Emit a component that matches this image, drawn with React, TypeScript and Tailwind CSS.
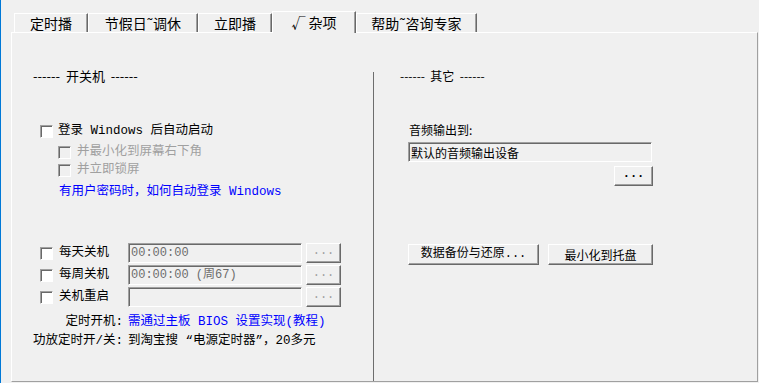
import React from "react";

const mono = { fontFamily: '"Liberation Mono","Noto Sans CJK SC",monospace' };
const sans = { fontFamily: '"Noto Sans CJK SC","Noto Sans",sans-serif' };

const sunken =
  "border border-t-[#a0a0a0] border-l-[#a0a0a0] border-b-white border-r-white shadow-[inset_1px_1px_0_#696969]";
const raised =
  "border border-t-white border-l-white border-r-[#696969] border-b-[#696969] shadow-[inset_-1px_-1px_0_#a0a0a0]";

const Check = ({ disabled = false }: { disabled?: boolean }) => (
  <div className={`w-[13px] h-[13px] shrink-0 ${sunken} ${disabled ? "bg-[#f0f0f0]" : "bg-white"}`} />
);

const Tab = ({ label, w, active = false }: { label: string; w: string; active?: boolean }) => (
  <div
    className={`${w} flex items-center justify-center border-l border-t border-white border-r border-r-[#696969] shadow-[inset_-1px_0_0_#a0a0a0] text-[14px] text-black ${
      active ? "h-[22px] -mb-px relative z-10 bg-[#f0f0f0]" : "h-[19px]"
    }`}
    style={sans}
  >
    {label}
  </div>
);

const ShutRow = ({ label, value }: { label: string; value: string }) => (
  <div className="flex items-center h-[20px] pl-[28px]">
    <Check />
    <span className="ml-[6px] w-[69px] text-[12.5px] leading-[15px]">{label}</span>
    <div className={`w-[174px] h-[20px] ${sunken} bg-[#f0f0f0] flex items-center pl-[2px] text-[12px] text-[#6d6d6d]`}>
      {value}
    </div>
    <div className={`ml-[4px] w-[35px] h-[20px] ${raised} bg-[#f0f0f0] flex items-center justify-center text-[12px] leading-none text-[#a0a0a0] pb-[4px]`}>
      ...
    </div>
  </div>
);

export default function App() {
  return (
    <div className="w-[759px] h-[383px] bg-[#f0f0f0] border-l border-[#0078d7] flex flex-col overflow-hidden" style={mono}>
      {/* tabs */}
      <div className="flex items-end h-[32px] pl-[13px]">
        <Tab label="定时播" w="w-[74px]" />
        <Tab label="节假日˜调休" w="w-[110px]" />
        <Tab label="立即播" w="w-[74px]" />
        <Tab label="√ 杂项" w="w-[84px]" active />
        <Tab label="帮助˜咨询专家" w="w-[121px]" />
      </div>

      {/* panel */}
      <div className="ml-[10px] mr-px h-[350px] border border-t-white border-l-white border-r-[#a0a0a0] border-b-[#a0a0a0] flex">
        {/* left column */}
        <div className="w-[361px] flex flex-col pt-[35px] text-[12.5px] leading-[15px] text-black">
          <div className="pl-[21px] text-[13px]" style={sans}>
            ------&nbsp;&nbsp;开关机&nbsp;&nbsp;------
          </div>

          <div className="mt-[41px] h-[15px] flex items-center gap-[5px] pl-[28px]">
            <Check />
            <span>登录 Windows 后自动启动</span>
          </div>
          <div className="mt-[6px] h-[15px] flex items-center gap-[6px] pl-[46px] text-[#a0a0a0]">
            <Check disabled />
            <span>并最小化到屏幕右下角</span>
          </div>
          <div className="mt-[3px] h-[15px] flex items-center gap-[6px] pl-[46px] text-[#a0a0a0]">
            <Check disabled />
            <span>并立即锁屏</span>
          </div>
          <div className="mt-[7px] h-[15px] pl-[47px] text-[#0000ff]">有用户密码时，如何自动登录 Windows</div>

          <div className="mt-[43px] flex flex-col gap-[2px]">
            <ShutRow label="每天关机" value="00:00:00" />
            <ShutRow label="每周关机" value="00:00:00 (周67)" />
            <ShutRow label="关机重启" value="" />
          </div>

          <div className="mt-[8px] h-[15px] flex">
            <span className="w-[111px] text-right">定时开机:</span>
            <span className="ml-[5px] text-[#0000ff]">需通过主板 BIOS 设置实现(教程)</span>
          </div>
          <div className="mt-[4px] h-[15px] flex">
            <span className="w-[111px] text-right">功放定时开/关:</span>
            <span className="ml-[5px]">到淘宝搜 “电源定时器”，20多元</span>
          </div>
        </div>

        {/* divider */}
        <div className="w-px mt-[39px] bg-[#6d6d6d]" />

        {/* right column */}
        <div className="flex-1 flex flex-col pt-[35px] text-[12px] leading-[15px] text-black">
          <div className="pl-[26px]" style={sans}>
            ------&nbsp;&nbsp;其它&nbsp;&nbsp;------
          </div>
          <div className="mt-[39px] pl-[35px]" style={sans}>
            音频输出到:
          </div>
          <div className={`mt-[5px] ml-[34px] w-[244px] h-[20px] ${sunken} bg-[#f0f0f0] flex items-center pl-[2px]`} style={sans}>
            默认的音频输出设备
          </div>
          <div className={`mt-[4px] ml-[240px] w-[39px] h-[20px] ${raised} bg-[#f0f0f0] flex items-center justify-center font-bold leading-none pb-[4px]`}>
            ...
          </div>
          <div className="mt-[58px] ml-[34px] flex gap-[9px]">
            <div className={`w-[131px] h-[21px] ${raised} bg-[#f0f0f0] flex items-center justify-center`}>
              数据备份与还原...
            </div>
            <div className={`w-[105px] h-[21px] ${raised} bg-[#f0f0f0] flex items-center justify-center`} style={sans}>
              最小化到托盘
            </div>
          </div>
        </div>
      </div>
    </div>
  );
}
